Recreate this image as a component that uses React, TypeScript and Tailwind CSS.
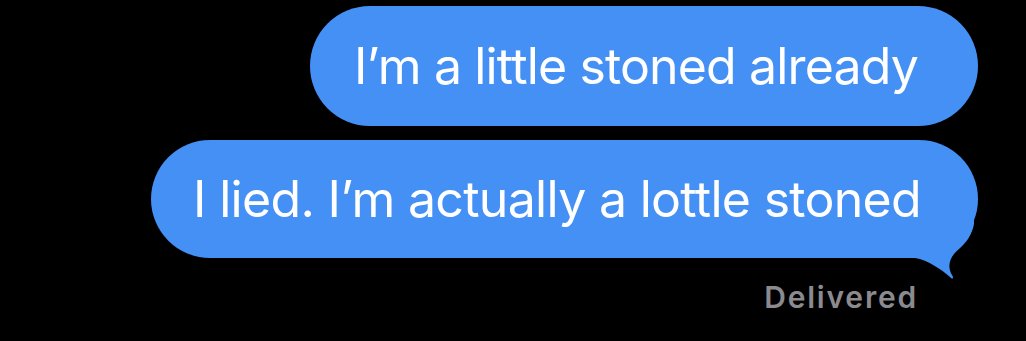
export default function App() {
  return (
    <div className="w-[1026px] h-[341px] bg-black overflow-hidden font-['Inter',sans-serif]">
      <div className="flex flex-col items-end pr-[48px] pt-[6px]">
        <div className="h-[120px] rounded-[60px] bg-[#4590f5] pl-[44px] pr-[60px] flex items-center">
          <span className="text-white text-[50px] leading-none tracking-[-0.85px]">I’m a little stoned already</span>
        </div>
        <div className="relative mt-[14px] h-[118px] rounded-[59px] bg-[#4590f5] pl-[42px] pr-[57px] flex items-center">
          <span className="text-white text-[50px] leading-none tracking-[-0.7px]">I lied. I’m actually a lottle stoned</span>
          <svg className="absolute right-0 top-[80px]" width="80" height="80" viewBox="0 0 80 80">
            <path
              d="M0 0 L0 38 L17 38 C30 40 44 50 52 57 C55 60 56 58 54 55 C49 47 51 37 61 29 C69 22 74 14 76 4 L76 0 Z"
              fill="#4590f5"
            />
          </svg>
        </div>
        <div className="mr-[60px] mt-[24px] text-[#8a8a8f] text-[30px] font-semibold leading-none tracking-[1.8px]">Delivered</div>
      </div>
    </div>
  );
}
